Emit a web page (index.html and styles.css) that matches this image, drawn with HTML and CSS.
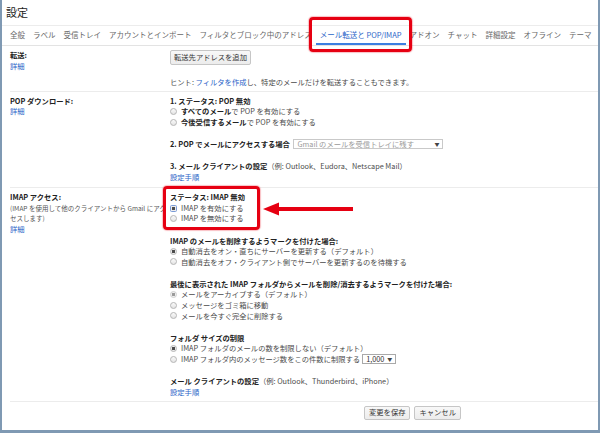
FILE: index.html
```html
<!DOCTYPE html>
<html lang="ja">
<head>
    <meta charset="UTF-8">
    <title>設定 - メール転送と POP/IMAP</title>
    <link rel="stylesheet" href="styles.css">
</head>
<body>

    <div class="page">
        <div class="title">設定</div>

        <!-- Tabs -->
        <div class="tabs">
            <span class="tab">全般</span>
            <span class="tab">ラベル</span>
            <span class="tab">受信トレイ</span>
            <span class="tab">アカウントとインポート</span>
            <span class="tab">フィルタとブロック中のアドレス</span>
            <span class="tab tab-active">メール転送と POP/IMAP</span>
            <span class="tab">アドオン</span>
            <span class="tab">チャット</span>
            <span class="tab">詳細設定</span>
            <span class="tab">オフライン</span>
            <span class="tab">テーマ</span>
        </div>

        <!-- Forwarding -->
        <div class="row row-forward">
            <div class="label">
                <div class="name">転送:</div>
                <a class="link" href="#">詳細</a>
            </div>
            <div class="field">
                <div class="group">
                    <button class="btn">転送先アドレスを追加</button>
                </div>
                <div class="group">ヒント: <a class="link-inline" href="#">フィルタを作成</a>し、特定のメールだけを転送することもできます。</div>
            </div>
        </div>

        <!-- POP -->
        <div class="row row-pop">
            <div class="label">
                <div class="name">POP ダウンロード:</div>
                <a class="link" href="#">詳細</a>
            </div>
            <div class="field">
                <div class="group">
                    <div class="heading">1. ステータス: POP 無効</div>
                    <div class="opt"><span class="radio"></span><span><b>すべてのメール</b>で POP を有効にする</span></div>
                    <div class="opt"><span class="radio"></span><span><b>今後受信するメール</b>で POP を有効にする</span></div>
                </div>
                <div class="group">
                    <span class="heading">2. POP でメールにアクセスする場合</span>
                    <span class="select select-pop"><span>Gmail のメールを受信トレイに残す</span><span class="caret">▼</span></span>
                </div>
                <div class="group">
                    <div><b class="heading">3. メール クライアントの設定</b>（例: Outlook、Eudora、Netscape Mail）</div>
                    <a class="link" href="#">設定手順</a>
                </div>
            </div>
        </div>

        <!-- IMAP -->
        <div class="row row-imap">
            <div class="label">
                <div class="name">IMAP アクセス:</div>
                <div class="desc">(IMAP を使用して他のクライアントから Gmail にアク<br>セスします)</div>
                <a class="link" href="#">詳細</a>
            </div>
            <div class="field">
                <div class="group status">
                    <div class="heading">ステータス: IMAP 無効</div>
                    <div class="opt"><span class="radio radio-on radio-focus"></span><span>IMAP を有効にする</span></div>
                    <div class="opt"><span class="radio"></span><span>IMAP を無効にする</span></div>
                    <svg class="arrow" viewBox="0 0 90 14">
                        <polygon points="0,7 16,0.5 16,5 90,5 90,9 16,9 16,13.5" fill="#e60012"/>
                    </svg>
                </div>
                <div class="group">
                    <div class="heading">IMAP のメールを削除するようマークを付けた場合:</div>
                    <div class="opt"><span class="radio radio-on"></span><span>自動消去をオン・直ちにサーバーを更新する（デフォルト）</span></div>
                    <div class="opt"><span class="radio"></span><span>自動消去をオフ・クライアント側でサーバーを更新するのを待機する</span></div>
                </div>
                <div class="group">
                    <div class="heading">最後に表示された IMAP フォルダからメールを削除/消去するようマークを付けた場合:</div>
                    <div class="opt"><span class="radio radio-dim"></span><span>メールをアーカイブする（デフォルト）</span></div>
                    <div class="opt"><span class="radio"></span><span>メッセージをゴミ箱に移動</span></div>
                    <div class="opt"><span class="radio"></span><span>メールを今すぐ完全に削除する</span></div>
                </div>
                <div class="group">
                    <div class="heading">フォルダ サイズの制限</div>
                    <div class="opt"><span class="radio radio-on"></span><span>IMAP フォルダのメールの数を制限しない（デフォルト）</span></div>
                    <div class="opt"><span class="radio"></span><span>IMAP フォルダ内のメッセージ数をこの件数に制限する</span><span class="select select-limit"><span>1,000</span><span class="caret">▼</span></span></div>
                </div>
                <div class="group">
                    <div><b class="heading">メール クライアントの設定</b>（例: Outlook、Thunderbird、iPhone）</div>
                    <a class="link" href="#">設定手順</a>
                </div>
            </div>
        </div>

        <!-- Buttons -->
        <div class="actions">
            <button class="btn btn-small">変更を保存</button>
            <button class="btn btn-small">キャンセル</button>
        </div>
    </div>

</body>
</html>
```

FILE: styles.css
```css
body {
    margin: 0;
    background-color: #fff;
}
.page {
    width: 600px;
    height: 433px;
    box-sizing: border-box;
    border: 2px solid #7f99b3;
    border-top: none;
    border-bottom-width: 3px;
    overflow: hidden;
    font-family: "Noto Sans CJK JP", sans-serif;
    font-size: 7.3px;
    line-height: 10.6px;
    color: #4a4a4a;
}
.title {
    height: 25px;
    line-height: 25px;
    padding-left: 4px;
    font-size: 11px;
    color: #222;
    border-bottom: 1px solid #ececec;
}
.tabs {
    display: flex;
    height: 19px;
    padding-left: 4px;
    border-bottom: 1px solid #e3e3e3;
    font-size: 7.5px;
    white-space: nowrap;
}
.tab {
    flex: none;
    padding: 0 4px;
    line-height: 17px;
    color: #666;
    border-bottom: 2px solid transparent;
}
.tab-active {
    position: relative;
    color: #2a64c8;
    border-bottom-color: #3d7ee0;
}
.tab-active::after {
    content: "";
    position: absolute;
    left: -7px;
    right: -6px;
    top: -9px;
    bottom: -9px;
    border: 3.5px solid #e60012;
    border-radius: 4px;
    box-shadow: 0 0 1px 1px rgba(230, 0, 18, 0.25);
}
.row {
    display: grid;
    grid-template-columns: 160px 1fr;
    margin-left: 8px;
    padding-top: 4px;
    border-bottom: 1px solid #ececec;
}
.row-forward {
    padding-bottom: 3.7px;
}
.row-pop {
    padding-bottom: 4.5px;
}
.row-imap {
    padding-bottom: 4px;
}
.name {
    font-weight: bold;
    color: #222;
}
.link {
    display: block;
    color: #2a64c8;
    text-decoration: none;
}
.link-inline {
    color: #2a64c8;
    text-decoration: none;
}
.desc {
    white-space: nowrap;
    font-size: 6.5px;
    color: #555;
}
.group + .group {
    margin-top: 11.6px;
}
.heading {
    font-weight: bold;
    color: #222;
}
b {
    color: #222;
}
.opt {
    display: flex;
    align-items: center;
    height: 10.6px;
    white-space: nowrap;
}
.radio {
    flex: none;
    width: 7px;
    height: 7px;
    box-sizing: border-box;
    margin-right: 4px;
    border: 1px solid #b5b5b5;
    border-radius: 50%;
    background: linear-gradient(#fafafa, #e4e4e4);
}
.radio-on {
    background: radial-gradient(circle, #4a4a4a 0 1.4px, #ececec 1.9px);
}
.radio-dim {
    background: radial-gradient(circle, #9a9a9a 0 1.4px, #f0f0f0 1.9px);
    border-color: #d0d0d0;
}
.radio-focus {
    border-radius: 1.5px;
    border-color: #7a9bd6;
}
.select {
    display: inline-flex;
    align-items: center;
    justify-content: space-between;
    height: 10px;
    box-sizing: border-box;
    margin-left: 2px;
    padding: 0 3px;
    border: 1px solid #c9c9c9;
    vertical-align: top;
    line-height: 8px;
}
.select-pop {
    width: 150px;
    color: #9a9a9a;
}
.select-limit {
    width: 34px;
    color: #333;
    border-color: #a9a9a9;
}
.caret {
    font-size: 5px;
    color: #444;
}
.status {
    position: relative;
    width: 83px;
}
.status::before {
    content: "";
    position: absolute;
    left: -7px;
    right: -7px;
    top: -6px;
    bottom: -6px;
    border: 3.5px solid #e60012;
    border-radius: 4px;
    box-shadow: 0 0 1px 1px rgba(230, 0, 18, 0.25);
}
.arrow {
    position: absolute;
    left: 93px;
    top: 10px;
    width: 90px;
    height: 14px;
}
.btn {
    display: block;
    height: 15px;
    padding: 0 3px;
    font-family: inherit;
    font-size: 7.3px;
    line-height: 13px;
    color: #333;
    border: 1px solid #c6c6c6;
    border-radius: 2px;
    background: linear-gradient(#f8f8f8, #ececec);
}
.actions {
    display: flex;
    gap: 4px;
    padding: 4px 0 0 362px;
}
.btn-small {
    height: 13.5px;
    line-height: 11.5px;
    padding: 0 4px;
}
```
